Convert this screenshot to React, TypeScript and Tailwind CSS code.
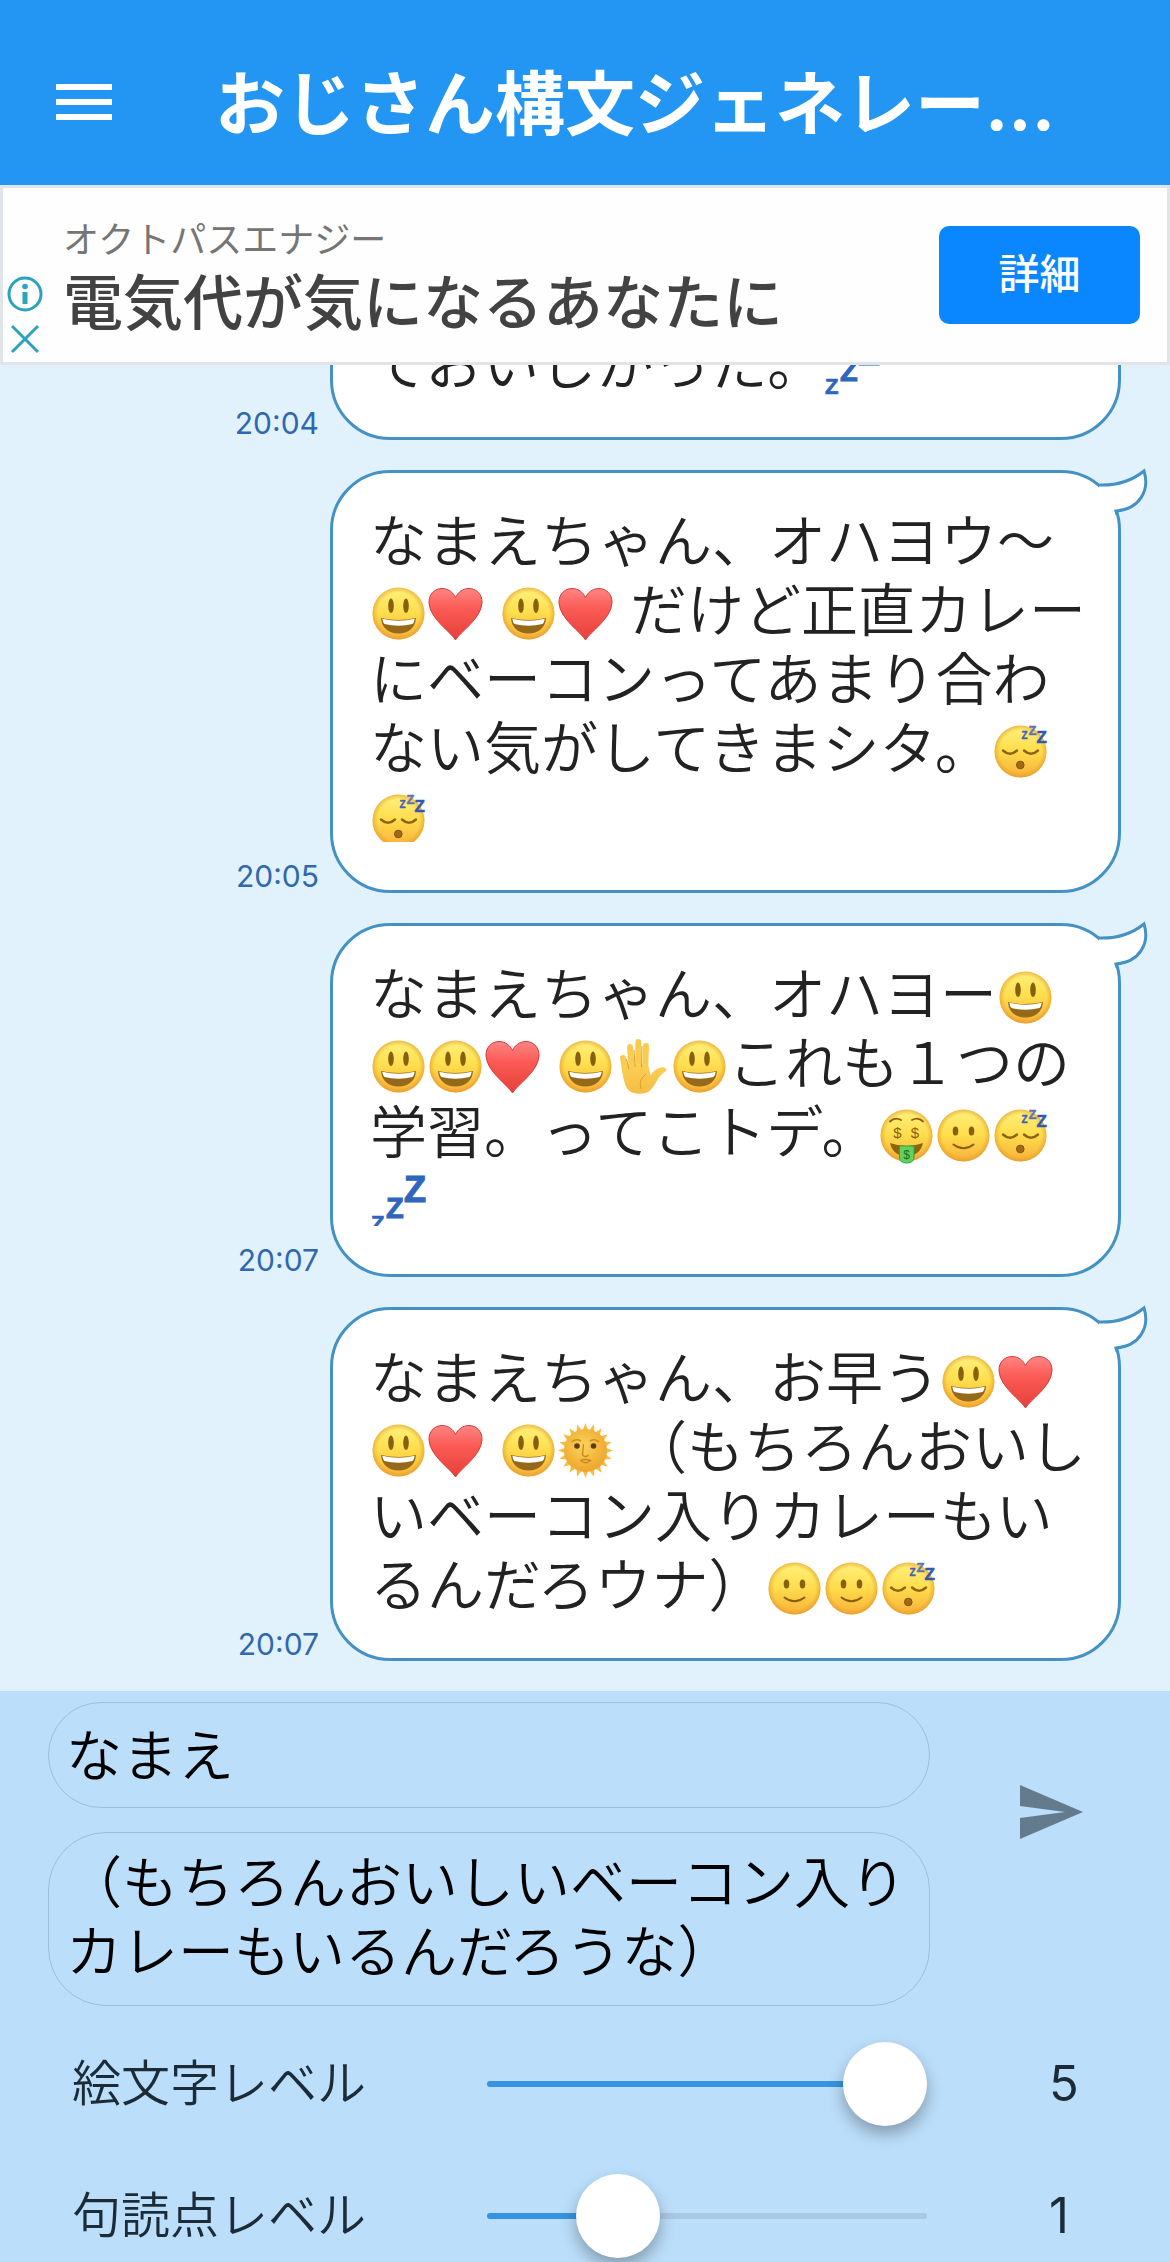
import React, { useState } from "react";

interface Message {
  id: number;
  time: string;
  text: string;
  clipped?: boolean;
}

const MESSAGES: Message[] = [
  { id: 1, time: "20:04", text: "ておいしかった。💤" },
  {
    id: 2,
    time: "20:05",
    text: "なまえちゃん、オハヨウ〜😃❤ 😃❤ だけど正直カレーにベーコンってあまり合わない気がしてきまシタ。😴😴",
    clipped: true,
  },
  {
    id: 3,
    time: "20:07",
    text: "なまえちゃん、オハヨー😃😃😃❤ 😃✋😃これも１つの学習。ってこトデ。🤑🙂😴💤",
    clipped: true,
  },
  {
    id: 4,
    time: "20:07",
    text: "なまえちゃん、お早う😃❤😃❤ 😃🌞 （もちろんおいしいベーコン入りカレーもいるんだろウナ）🙂🙂😴",
  },
];

// Dégradés partagés par tous les emojis
function EmojiDefs() {
  return (
    <svg className="absolute h-0 w-0" aria-hidden="true">
      <defs>
        <linearGradient id="face" x1="0" y1="0" x2="0" y2="1">
          <stop offset="0" stopColor="#fff27c" />
          <stop offset="0.5" stopColor="#ffdc4b" />
          <stop offset="1" stopColor="#f8b03a" />
        </linearGradient>
        <radialGradient id="faceEdge" cx="0.5" cy="0.5" r="0.5">
          <stop offset="0.8" stopColor="#e79a20" stopOpacity="0" />
          <stop offset="1" stopColor="#e0962a" stopOpacity="0.6" />
        </radialGradient>
        <linearGradient id="heart" x1="0" y1="0" x2="0" y2="1">
          <stop offset="0" stopColor="#ff8582" />
          <stop offset="0.4" stopColor="#fb5a54" />
          <stop offset="1" stopColor="#e6403a" />
        </linearGradient>
        <linearGradient id="hand" x1="0" y1="0" x2="0" y2="1">
          <stop offset="0" stopColor="#fbd055" />
          <stop offset="1" stopColor="#f6bd44" />
        </linearGradient>
        <radialGradient id="sun" cx="0.45" cy="0.4" r="0.6">
          <stop offset="0" stopColor="#fbd45a" />
          <stop offset="1" stopColor="#eea52d" />
        </radialGradient>
      </defs>
    </svg>
  );
}

function Face() {
  return (
    <>
      <circle cx="28.5" cy="28.5" r="26" fill="url(#face)" />
      <circle cx="28.5" cy="28.5" r="26" fill="url(#faceEdge)" />
    </>
  );
}

function Zed({ x, y, size, color }: { x: number; y: number; size: number; color: string }) {
  return (
    <text
      x={x}
      y={y}
      fontSize={size}
      fontWeight="bold"
      fontFamily="Liberation Sans, sans-serif"
      fill={color}
      stroke={color}
      strokeWidth={size / 30}
    >
      Z
    </text>
  );
}

const SUN_RAYS = Array.from({ length: 20 }, (_, i) => i * 18);

const EMOJI: Record<string, React.ReactNode> = {
  "😃": (
    <>
      <Face />
      <ellipse cx="21" cy="20.8" rx="2.8" ry="7.2" fill="#86600f" />
      <ellipse cx="36" cy="20.8" rx="2.8" ry="7.2" fill="#86600f" />
      <path d="M11 33 Q28.5 37 46 33 C45.5 43 38 48.5 28.5 48.5 S11.5 43 11 33Z" fill="#94691a" />
      <path d="M12.3 33.8 Q28.5 37.5 44.7 33.8 Q44.5 37 42.5 39 Q28.5 42.5 14.5 39 Q12.5 37 12.3 33.8Z" fill="#fff" />
    </>
  ),
  "❤": (
    <path
      d="M28.5 55 C24 47 3 34 2 18 C1.5 9 8 3.5 15 3.5 C21 3.5 26 7 28.5 12.5 C31 7 36 3.5 42 3.5 C49 3.5 55.5 9 55 18 C54 34 33 47 28.5 55Z"
      fill="url(#heart)"
      stroke="#d83a3a"
      strokeWidth="1"
    />
  ),
  "😴": (
    <>
      <Face />
      <path
        d="M11 27.5 Q18 34 25 27.5 M32 27.5 Q39 34 46 27.5"
        fill="none"
        stroke="#8d6512"
        strokeWidth="2.4"
        strokeLinecap="round"
      />
      <circle cx="28.3" cy="42" r="3.8" fill="#a06a14" stroke="#7c540c" />
      <Zed x={29.5} y={15.5} size={10} color="#3f63b5" />
      <Zed x={36.5} y={12} size={13} color="#5b72b8" />
      <Zed x={44.5} y={20} size={17} color="#3557b0" />
    </>
  ),
  "🙂": (
    <>
      <Face />
      <ellipse cx="20.5" cy="24" rx="2.8" ry="4.5" fill="#86600f" />
      <ellipse cx="36.5" cy="24" rx="2.8" ry="4.5" fill="#86600f" />
      <path d="M18.5 37.5 Q28.5 45 38.5 37.5" fill="none" stroke="#86600f" strokeWidth="2" strokeLinecap="round" />
    </>
  ),
  "🤑": (
    <>
      <Face />
      <path
        d="M12 14.5 Q17 9.5 23 13 M34 13 Q40 9.5 45 14.5"
        fill="none"
        stroke="#86600f"
        strokeWidth="1.8"
        strokeLinecap="round"
      />
      <path d="M12 36 Q28.5 42 45 36 Q42 49 28.5 49 T12 36Z" fill="#8d6512" />
      <path d="M21.5 39 H36 V50 Q36 56 28.7 56 T21.5 50Z" fill="#5fd35b" stroke="#35a23a" />
      <g fontFamily="Liberation Sans, sans-serif" textAnchor="middle">
        <text x="19.5" y="31" fontSize="15" fill="#86600f">$</text>
        <text x="37" y="31" fontSize="15" fill="#86600f">$</text>
        <text x="28.7" y="51.5" fontSize="12" fill="#1e6b26">$</text>
      </g>
    </>
  ),
  "💤": (
    <>
      <Zed x={34} y={26} size={36} color="#2f66bd" />
      <Zed x={16} y={42} size={29} color="#2f66bd" />
      <Zed x={1} y={55} size={22} color="#2f66bd" />
    </>
  ),
  "✋": (
    <>
      <g stroke="#f9cb4f" strokeWidth="6" strokeLinecap="round" fill="none">
        <path d="M9 20 L12 38" />
        <path d="M16 9 L18 34" />
        <path d="M24.3 4 V32" />
        <path d="M32 8 L31 34" />
      </g>
      <path
        d="M8 29 L12 26 L33 26 L35 30 L36.5 37 C41 31 46 28.5 50.500 29.5 C53 31 53 33 50 34.5 C44 38 42 47 36 52.5 C31 57 18 57 13.500 51 C9.5 45 9 37 8 29Z"
        fill="url(#hand)"
      />
      <path
        d="M12.5 21 L15 31 M20 12 L21 29 M28 8 L27.500 29 M32 36 Q24 42 27 51"
        fill="none"
        stroke="#dda02c"
        strokeWidth="1"
      />
    </>
  ),
  "🌞": (
    <>
      {SUN_RAYS.map((deg) => (
        <path key={deg} d="M25.5 9 L28.5 1 L31.5 9Z" fill="#f6bd45" transform={`rotate(${deg} 28.5 28.5)`} />
      ))}
      <circle cx="28.5" cy="28.5" r="21.5" fill="url(#sun)" />
      <path d="M14.5 20 Q19 16 24 19 M33 19 Q38 16 42 20" fill="none" stroke="#d18d22" strokeWidth="1.5" />
      <circle cx="20" cy="24" r="2.8" fill="#5e3d12" />
      <circle cx="36.5" cy="24" r="2.8" fill="#5e3d12" />
      <path
        d="M26.5 22 L25.5 33 Q28.5 36 31.5 33 M23.5 38.5 Q28.5 36.5 33.5 38.5 Q28.5 43 23.5 38.5"
        fill="none"
        stroke="#cf8621"
        strokeWidth="1.4"
      />
    </>
  ),
};

function MessageText({ text }: { text: string }) {
  return (
    <>
      {text.split(/([😃❤😴🤑🙂💤✋🌞])/u).map((part, index) =>
        EMOJI[part] ? (
          <svg
            key={index}
            viewBox="0 0 57 57"
            role="img"
            aria-label={part}
            className="inline-block h-[57px] w-[57px] overflow-visible align-[-11px]"
          >
            {EMOJI[part]}
          </svg>
        ) : (
          <React.Fragment key={index}>{part}</React.Fragment>
        )
      )}
    </>
  );
}

function Bubble({ message }: { message: Message }) {
  return (
    <li className="flex shrink-0 items-end justify-end gap-[11px]">
      <time className="text-[30px] leading-[34px] text-[#2f68ae]">{message.time}</time>
      <div className="relative w-[791px] rounded-[60px] border-3 border-[#4491c6] bg-white pt-[34px] pr-[28px] pb-[48px] pl-[37px]">
        <div className={message.clipped ? "overflow-hidden" : ""}>
          <p className="-mb-[10px] text-[57px] leading-[69px] font-[350] text-[#222222]">
            <MessageText text={message.text} />
          </p>
        </div>
        {/* Queue de la bulle */}
        <svg viewBox="0 0 60 50" className="absolute -top-[8px] -right-[32px] h-[50px] w-[60px]" aria-hidden="true">
          <path d="M9 21 C28 21 44 14 54 6 C60 25 50 44 27 46 L10 42Z" fill="#fff" />
          <path d="M8 20 C28 21 44 14 54 6 C60 25 50 44 26 46 L28 53" fill="none" stroke="#4491c6" strokeWidth="3" />
        </svg>
      </div>
    </li>
  );
}

function AdBanner() {
  return (
    <aside className="flex shrink-0 items-center border-3 border-[#e1e5e9] bg-[#fefefe] pr-[27px]">
      <div className="flex w-[60px] flex-col items-start gap-[12px] self-end pb-[8px] pl-[4px] text-[#2ba3bd]">
        <svg viewBox="0 0 36 36" className="h-[36px] w-[36px]" fill="none" stroke="currentColor" aria-hidden="true">
          <circle cx="18" cy="18" r="16" strokeWidth="3" />
          <path d="M18 16 V28" strokeWidth="5" />
          <circle cx="18" cy="10.5" r="2.8" fill="currentColor" stroke="none" />
        </svg>
        <button type="button" aria-label="閉じる">
          <svg
            viewBox="0 0 36 30"
            className="h-[30px] w-[36px]"
            fill="none"
            stroke="currentColor"
            strokeWidth="3"
            aria-hidden="true"
          >
            <path d="M5 2 L31 28 M31 2 L5 28" />
          </svg>
        </button>
      </div>
      <div className="flex-1 pt-[27px] pb-[20px]">
        <p className="text-[36px] leading-[50px] text-[#757575]">オクトパスエナジー</p>
        <p className="text-[60px] leading-[77px] font-medium text-[#424242]">電気代が気になるあなたに</p>
      </div>
      <a
        href="#details"
        className="flex h-[98px] w-[201px] items-center justify-center rounded-[10px] bg-[#0a86ff] text-[41px] font-medium text-white"
      >
        詳細
      </a>
    </aside>
  );
}

interface LevelSliderProps {
  id: string;
  label: string;
  max: number;
  value: number;
  onChange: (value: number) => void;
}

function LevelSlider({ id, label, max, value, onChange }: LevelSliderProps) {
  const ratio = value / max;
  const fill = `calc(42px + (100% - 84px) * ${ratio})`;

  return (
    <div className="grid h-[132px] grid-cols-[1fr_440px_243px] items-center pl-[72px] text-[49px] leading-[70px] text-[#1b2b38]">
      <label htmlFor={id} className="font-[350]">
        {label}
      </label>
      <input
        id={id}
        type="range"
        min={0}
        max={max}
        value={value}
        onChange={(e) => onChange(Number(e.target.value))}
        style={{ "--track": `linear-gradient(to right, #3693df ${fill}, #a9c8e4 ${fill})` } as React.CSSProperties}
        className="h-[84px] w-full appearance-none bg-transparent [&::-webkit-slider-runnable-track]:h-[6px] [&::-webkit-slider-runnable-track]:rounded-full [&::-webkit-slider-runnable-track]:bg-(image:--track) [&::-webkit-slider-thumb]:-mt-[39px] [&::-webkit-slider-thumb]:h-[84px] [&::-webkit-slider-thumb]:w-[84px] [&::-webkit-slider-thumb]:appearance-none [&::-webkit-slider-thumb]:rounded-full [&::-webkit-slider-thumb]:bg-white [&::-webkit-slider-thumb]:shadow-[0_8px_16px_rgba(0,0,0,0.3)]"
      />
      <output htmlFor={id} className="pl-[122px]">
        {value}
      </output>
    </div>
  );
}

export default function App() {
  const [name, setName] = useState("なまえ");
  const [body, setBody] = useState("（もちろんおいしいベーコン入りカレーもいるんだろうな）");
  const [emojiLevel, setEmojiLevel] = useState(5);
  const [punctuationLevel, setPunctuationLevel] = useState(1);

  return (
    <div
      lang="ja"
      className="flex h-screen flex-col overflow-hidden bg-[#e1f2fc] font-['Inter','Noto_Sans_CJK_JP',sans-serif]"
    >
      <EmojiDefs />
      <header className="flex h-[185px] shrink-0 items-center gap-[96px] bg-[#2296f2] pt-[20px] pr-[108px] pl-[56px] text-white">
        <button type="button" aria-label="メニュー">
          <svg viewBox="0 0 56 38" className="h-[38px] w-[56px]" fill="currentColor" aria-hidden="true">
            <path d="M0 0H56V6H0Z M0 15H56V21H0Z M0 30H56V36H0Z" />
          </svg>
        </button>
        <h1 className="flex-1 pt-[4px] text-center text-[70px] leading-[96px] font-bold whitespace-nowrap">
          おじさん構文ジェネレー...
        </h1>
      </header>

      <AdBanner />

      <main className="flex min-h-0 flex-1 flex-col justify-end overflow-hidden">
        <ul className="flex flex-col gap-[30px] pr-[49px] pb-[30px]">
          {MESSAGES.map((message) => (
            <Bubble key={message.id} message={message} />
          ))}
        </ul>
      </main>

      <footer className="h-[571px] shrink-0 overflow-hidden bg-[#bbdefa]">
        <form
          className="grid grid-cols-[1fr_240px] items-center pt-[11px] pl-[48px]"
          onSubmit={(e) => e.preventDefault()}
        >
          <div className="flex flex-col gap-[24px]">
            <input
              type="text"
              aria-label="名前"
              value={name}
              onChange={(e) => setName(e.target.value)}
              className="h-[106px] w-full rounded-[53px] border border-[#9dbfdb] bg-transparent px-[17px] pb-[8px] text-[56px] leading-[69px] font-[350] text-black"
            />
            <textarea
              aria-label="メッセージ"
              rows={2}
              value={body}
              onChange={(e) => setBody(e.target.value)}
              className="h-[174px] w-full resize-none overflow-hidden rounded-[58px] border border-[#9dbfdb] bg-transparent px-[17px] pt-[16px] text-[56px] leading-[69px] font-[350] text-black"
            />
          </div>
          <button type="submit" aria-label="送信" className="-mt-[84px] justify-self-center">
            <svg viewBox="0 0 24 24" className="h-[72px] w-[72px]" fill="#647b8e" aria-hidden="true">
              <path d="M2.01 21 23 12 2.01 3 2 10l15 2-15 2z" />
            </svg>
          </button>
        </form>
        <div className="mt-[12px]">
          <LevelSlider
            id="emoji-level"
            label="絵文字レベル"
            max={5}
            value={emojiLevel}
            onChange={setEmojiLevel}
          />
          <LevelSlider
            id="punctuation-level"
            label="句読点レベル"
            max={4}
            value={punctuationLevel}
            onChange={setPunctuationLevel}
          />
        </div>
      </footer>
    </div>
  );
}
